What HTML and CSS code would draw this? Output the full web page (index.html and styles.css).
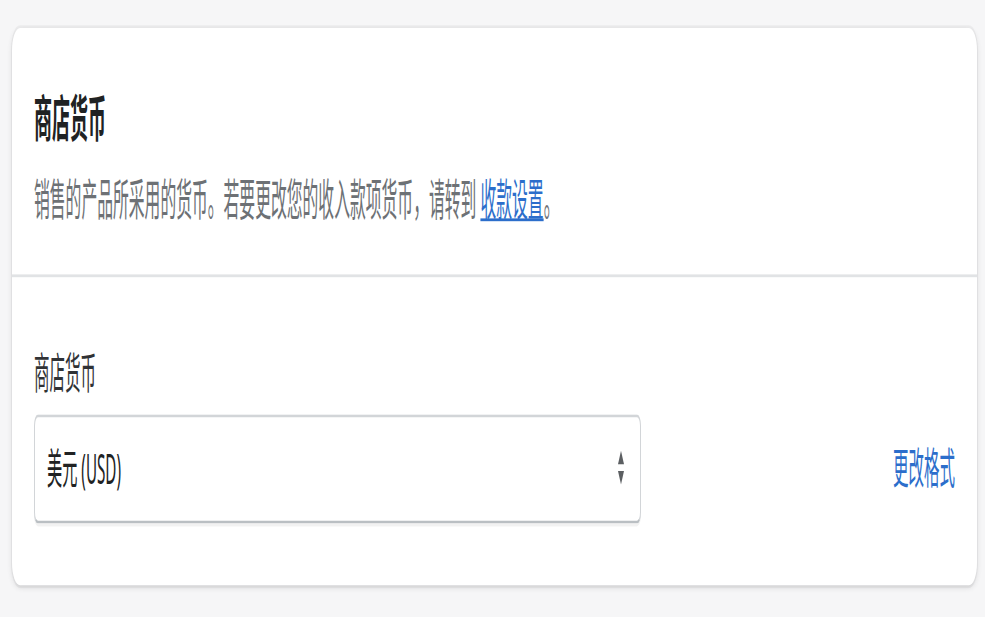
FILE: index.html
```html
<!DOCTYPE html>
<html lang="zh-CN">
<head>
    <meta charset="UTF-8">
    <meta name="viewport" content="width=device-width, initial-scale=1.0">
    <title>商店货币</title>
    <link rel="stylesheet" href="styles.css">
</head>
<body>
    <div class="page">
        <div class="card">
            <div class="card-section">
                <h2 class="card-title">商店货币</h2>
                <p class="card-text">销售的产品所采用的货币。若要更改您的收入款项货币，请转到 <a href="#" class="link">收款设置</a>。</p>
            </div>
            <div class="card-section card-section-form">
                <div class="field-label">商店货币</div>
                <div class="field-row">
                    <div class="select">
                        <span class="select-value">美元 (USD)</span>
                        <svg class="select-arrows" width="8" height="12" viewBox="0 0 8 12">
                            <polygon points="4,0 7,4.8 1,4.8" fill="#5c5f62"/>
                            <polygon points="1,7.2 7,7.2 4,12" fill="#5c5f62"/>
                        </svg>
                    </div>
                    <a href="#" class="action-link">更改格式</a>
                </div>
            </div>
        </div>
    </div>
</body>
</html>
```

FILE: styles.css
```css
html {
    overflow: hidden;
    background: #f6f6f7;
}
body {
    margin: 0;
    min-height: 100vh;
    font-family: "Noto Sans", "Noto Sans CJK SC", sans-serif;
    color: #202223;
}
/* the whole view is stretched vertically */
.page {
    transform: scaleY(2.8);
    transform-origin: top left;
    padding: 10px 8px 0 12px;
}
.card {
    background: #fff;
    border-radius: 8px;
    box-shadow: 0 0 0 1px rgba(63, 63, 68, 0.05), 0 1px 3px 0 rgba(63, 63, 68, 0.15);
}
.card-section {
    padding: 22px 22px 17px;
}
.card-section-form {
    border-top: 1px solid #e1e3e5;
    padding-top: 24px;
    padding-bottom: 22px;
}
.card-title {
    margin: 0;
    font-size: 18px;
    line-height: 20px;
    font-weight: 700;
    color: #202223;
}
.card-text {
    margin: 9px 0 0;
    font-size: 15.8px;
    line-height: 20px;
    color: #6d7175;
}
.link {
    color: #2c6ecb;
    text-decoration: underline;
}
.field-label {
    font-size: 15.5px;
    line-height: 20px;
    color: #303235;
    margin-bottom: 4.5px;
}
.field-row {
    display: flex;
    align-items: center;
    justify-content: space-between;
}
.select {
    width: 607px;
    height: 39px;
    box-sizing: border-box;
    display: flex;
    align-items: center;
    justify-content: space-between;
    padding: 0 15px 0 12px;
    background: #fff;
    border: 1px solid #d2d5d8;
    border-bottom-color: #babfc3;
    border-radius: 4px;
    box-shadow: 0 1px 0 rgba(0, 0, 0, 0.05);
}
.select-value {
    font-size: 15.2px;
    line-height: 20px;
    color: #202223;
}
.action-link {
    font-size: 15.5px;
    line-height: 20px;
    color: #2c6ecb;
    text-decoration: none;
}
```
